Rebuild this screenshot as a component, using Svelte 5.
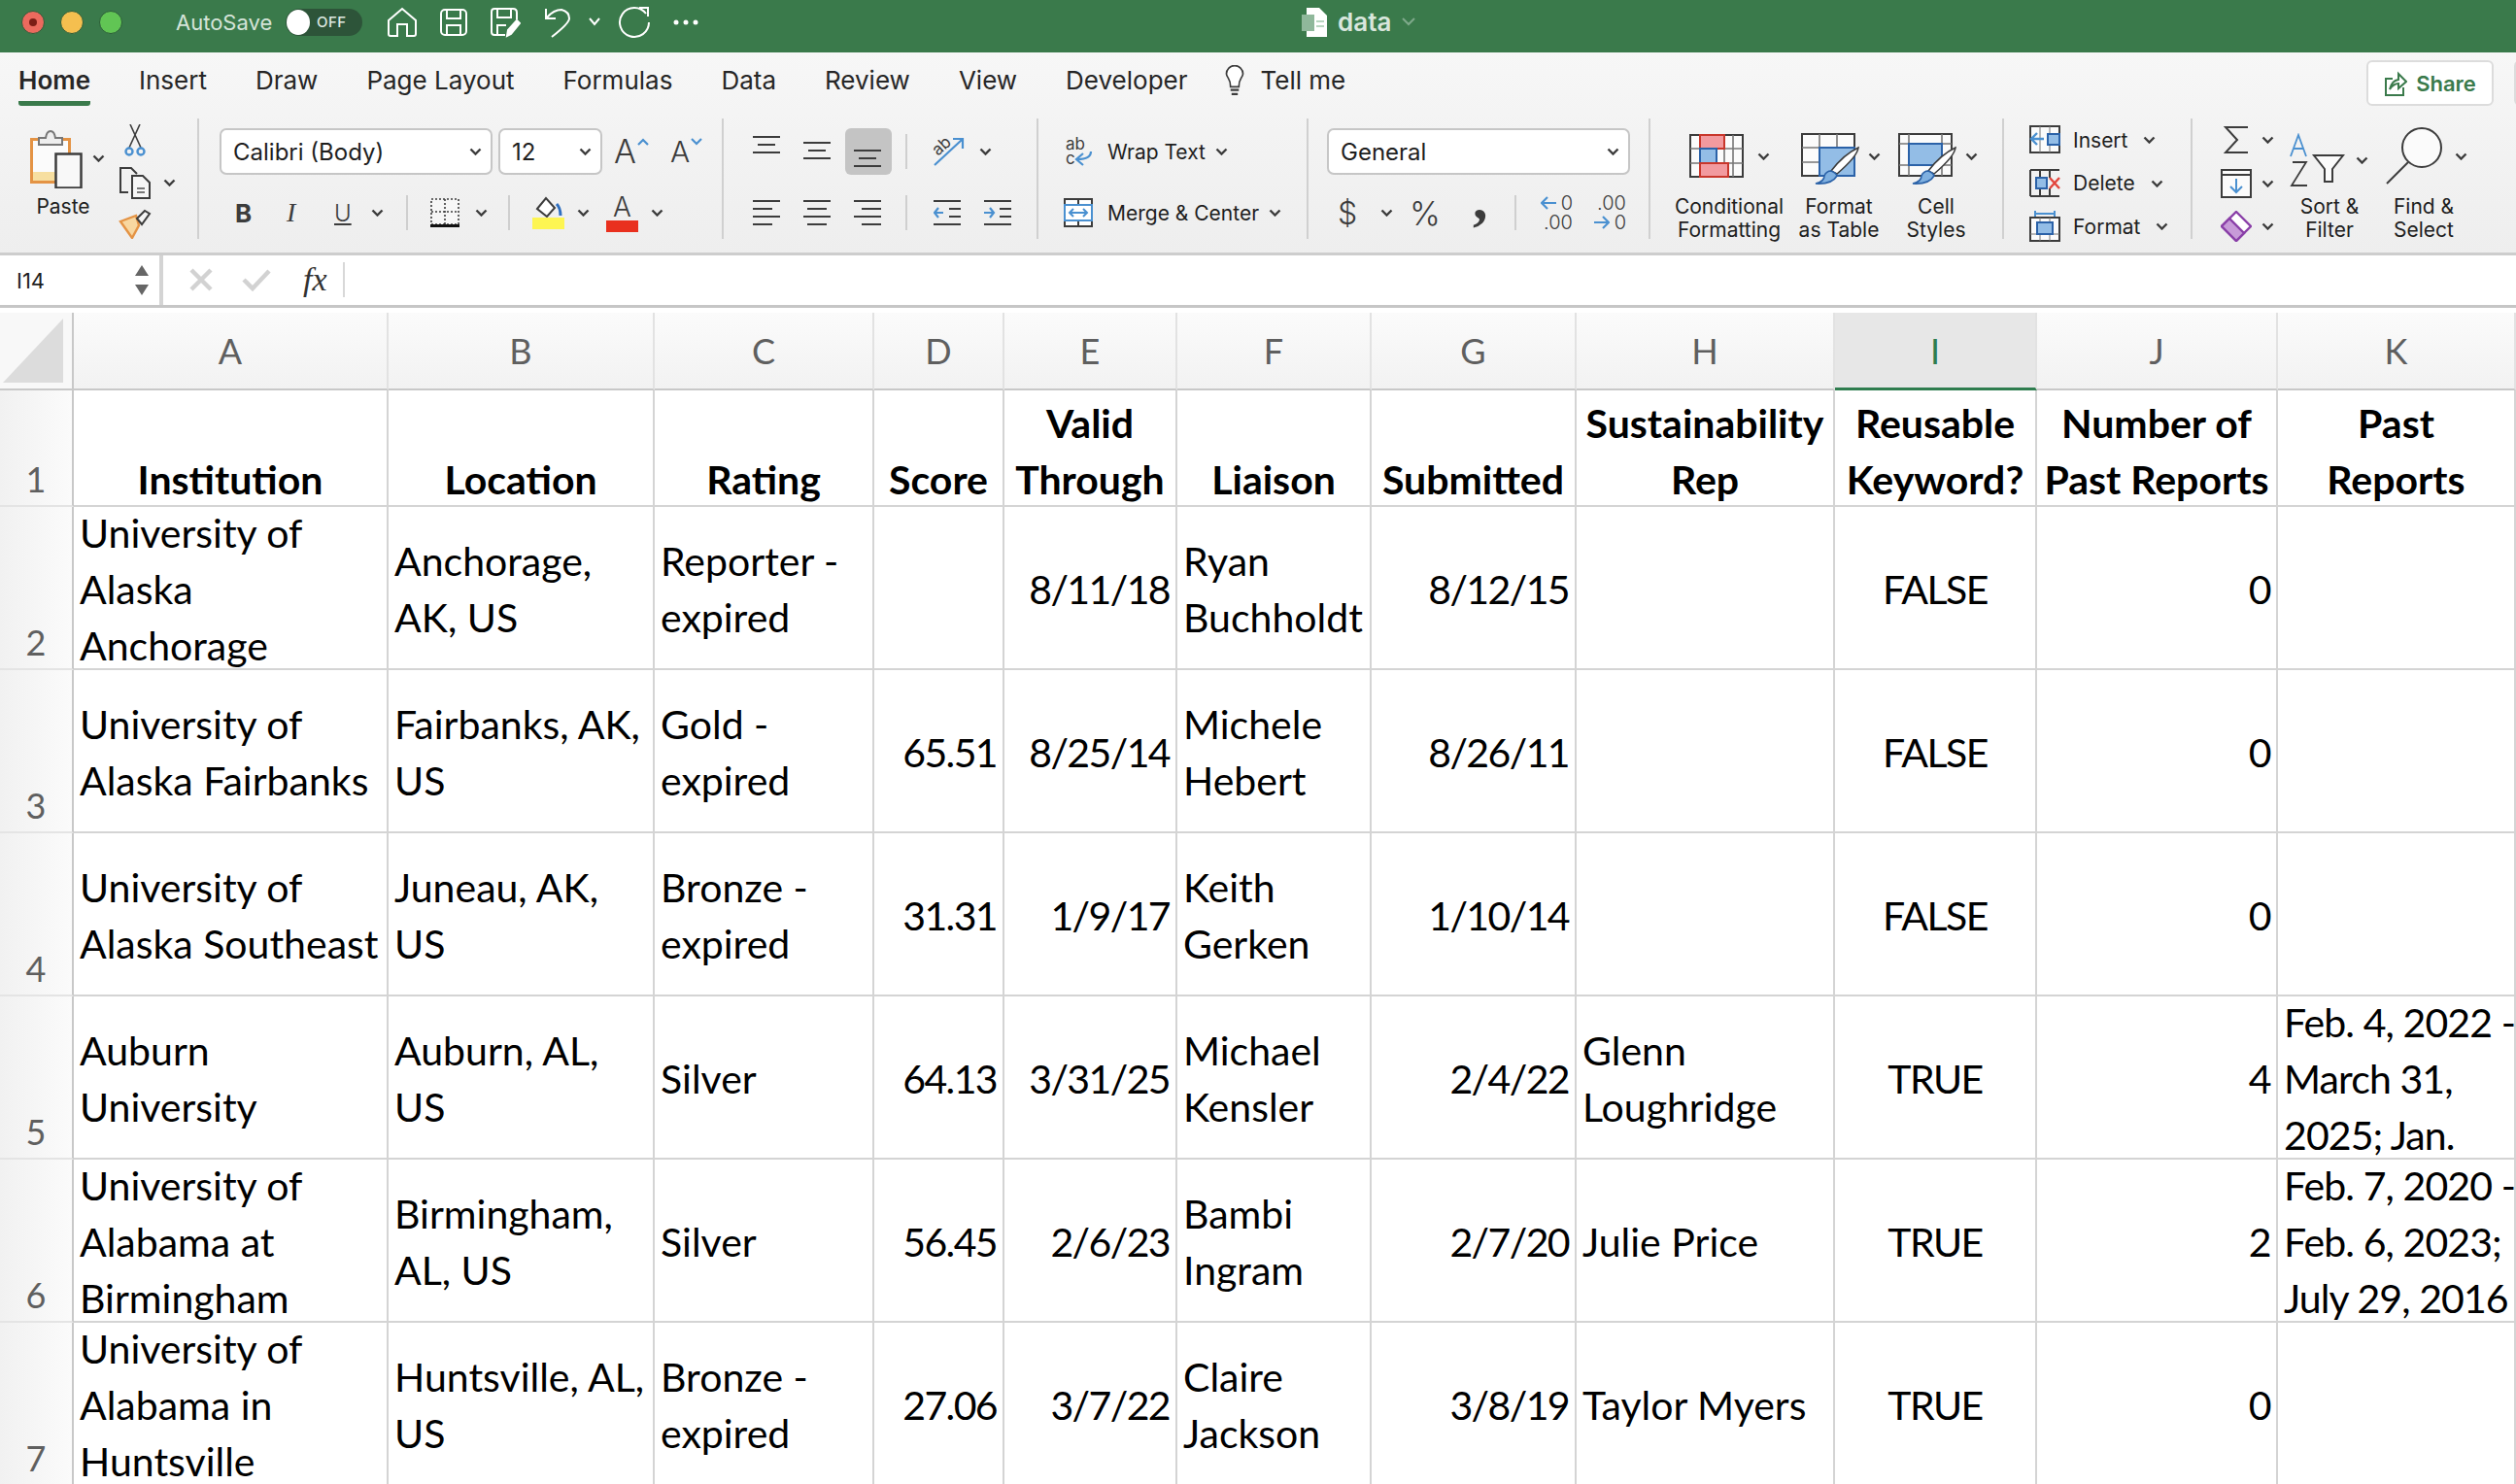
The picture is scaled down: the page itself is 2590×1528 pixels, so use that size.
<script>
  const columns = ['A', 'B', 'C', 'D', 'E', 'F', 'G', 'H', 'I', 'J', 'K'];
  const align = ['l', 'l', 'l', 'r', 'r', 'l', 'r', 'l', 'c', 'r', 'k'];
  const headers = ['Institution', 'Location', 'Rating', 'Score', 'Valid\nThrough', 'Liaison', 'Submitted', 'Sustainability\nRep', 'Reusable\nKeyword?', 'Number of\nPast Reports', 'Past\nReports'];
  const rows = [
    ['University of\nAlaska\nAnchorage', 'Anchorage,\nAK, US', 'Reporter -\nexpired', '', '8/11/18', 'Ryan\nBuchholdt', '8/12/15', '', 'FALSE', '0', ''],
    ['University of\nAlaska Fairbanks', 'Fairbanks, AK,\nUS', 'Gold -\nexpired', '65.51', '8/25/14', 'Michele\nHebert', '8/26/11', '', 'FALSE', '0', ''],
    ['University of\nAlaska Southeast', 'Juneau, AK,\nUS', 'Bronze -\nexpired', '31.31', '1/9/17', 'Keith\nGerken', '1/10/14', '', 'FALSE', '0', ''],
    ['Auburn\nUniversity', 'Auburn, AL,\nUS', 'Silver', '64.13', '3/31/25', 'Michael\nKensler', '2/4/22', 'Glenn\nLoughridge', 'TRUE', '4', 'Feb. 4, 2022 -\nMarch 31,\n2025; Jan.'],
    ['University of\nAlabama at\nBirmingham', 'Birmingham,\nAL, US', 'Silver', '56.45', '2/6/23', 'Bambi\nIngram', '2/7/20', 'Julie Price', 'TRUE', '2', 'Feb. 7, 2020 -\nFeb. 6, 2023;\nJuly 29, 2016'],
    ['University of\nAlabama in\nHuntsville', 'Huntsville, AL,\nUS', 'Bronze -\nexpired', '27.06', '3/7/22', 'Claire\nJackson', '3/8/19', 'Taylor Myers', 'TRUE', '0', '']
  ];
  const tabs = ['Insert', 'Draw', 'Page Layout', 'Formulas', 'Data', 'Review', 'View', 'Developer'];
</script>

{#snippet chev()}
  <svg class="chev" width="13" height="8" viewBox="0 0 13 8"><path d="M1.5 1.5 L6.5 6.5 L11.5 1.5" fill="none" stroke="#3c3c3c" stroke-width="2.4" /></svg>
{/snippet}

{#snippet lines()}
  <svg width="28" height="18" viewBox="0 0 28 18" fill="none" stroke="#3c3c3c" stroke-width="2">
    <path d="M0 1H28M5 9H23M0 17H28" />
  </svg>
{/snippet}

<div class="page">
  <header class="title">
    <div class="lights">
      <span class="light red"><i></i></span>
      <span class="light yellow"></span>
      <span class="light green"></span>
    </div>
    <span class="autosave">AutoSave</span>
    <span class="toggle"><i></i><b>OFF</b></span>
    <div class="quick">
      <svg width="32" height="32" viewBox="0 0 32 32" fill="none" stroke="#fff" stroke-width="2"><path d="M2 14 L16 2 L30 14 V28 Q30 30 28 30 H21 V18 H11 V30 H4 Q2 30 2 28 Z" /></svg>
      <svg width="30" height="30" viewBox="0 0 30 30" fill="none" stroke="#fff" stroke-width="2"><rect x="2" y="2" width="26" height="26" rx="4" /><path d="M8 2V11H22V2M8 28V18H22V28" /></svg>
      <svg width="32" height="32" viewBox="0 0 32 32" fill="none" stroke="#fff" stroke-width="2"><path d="M16 29H5Q2 29 2 26V5Q2 2 5 2H24Q28 2 28 6V13M8 2V11H22V2M8 28V19H17" /><path d="M18 30 L19 24 L28 14 L31 17 L22 28 Z" fill="#fff" /></svg>
      <svg class="undo" width="32" height="32" viewBox="0 0 32 32" fill="none" stroke="#fff" stroke-width="2"><path d="M2 2V12H12M3 11 Q10 3 18 3 Q26 5 26 12 Q26 17 8 31" /></svg>
      <svg class="small" width="12" height="9" viewBox="0 0 12 9" fill="none" stroke="#fff" stroke-width="2"><path d="M1 1L6 7L11 1" /></svg>
      <svg class="redo" width="34" height="34" viewBox="0 0 34 34" fill="none" stroke="#fff" stroke-width="2"><path d="M29 8 A15 15 0 1 0 32 17M22 2H31V11" /></svg>
      <svg class="dots" width="26" height="6" viewBox="0 0 26 6" fill="#fff"><circle cx="3" cy="3" r="2.5" /><circle cx="13" cy="3" r="2.5" /><circle cx="23" cy="3" r="2.5" /></svg>
    </div>
    <div class="doc">
      <svg width="26" height="30" viewBox="0 0 26 30"><path d="M5 0H18L26 8V30H5Z" fill="#fff" /><rect x="0" y="7" width="13" height="17" fill="#8fb89b" /><path d="M15 14h8M15 19h8" stroke="#b8d6c0" stroke-width="2" /></svg>
      <span>data</span>
      <svg width="14" height="9" viewBox="0 0 14 9" fill="none" stroke="#7fa98b" stroke-width="2"><path d="M1 1L7 7L13 1" /></svg>
    </div>
  </header>

  <section class="ribbon">
    <nav class="tabs">
      <span class="tab active">Home</span>
      {#each tabs as tab}
        <span class="tab">{tab}</span>
      {/each}
      <svg class="bulb" width="20" height="32" viewBox="0 0 18 30" fill="none" stroke="#3c3c3c" stroke-width="1.6"><path d="M5 21 Q5 16 3 13 Q1 10 1 8.5 A8 8 0 0 1 17 8.5 Q17 10 15 13 Q13 16 13 21 Z" fill="#fff" /><path d="M5 24H13M6 28H12" stroke-width="2" /></svg>
      <span class="tab tell">Tell me</span>
      <span class="share">
        <svg width="24" height="26" viewBox="0 0 24 26" fill="none" stroke="#3a7a4b" stroke-width="2"><path d="M9 8H2V25H20V17" /><path d="M6 19 Q8 10 15 9V3L23 11L15 18V13Q10 13 6 19Z" /></svg>
        Share
      </span>
      <span class="more"></span>
    </nav>

    <div class="groups">
      <div class="group clipboard">
        <div class="big paste">
          <div class="iconrow">
            <svg width="60" height="62" viewBox="0 0 60 62">
              <rect x="3.5" y="11.5" width="39" height="44" fill="#f7dfa0" stroke="#e49344" stroke-width="3" />
              <rect x="5" y="13" width="36" height="32" fill="#fbfbfb" />
              <path d="M11 17V10H18Q19 3 23 3Q27 3 28 10H35V17Z" fill="#eee" stroke="#777" stroke-width="2" />
              <rect x="28.5" y="26.5" width="26" height="35" fill="#f8f8f8" stroke="#3c3c3c" stroke-width="2.5" />
            </svg>
            {@render chev()}
          </div>
          <span class="label">Paste</span>
        </div>
        <div class="tools">
          <svg width="22" height="34" viewBox="0 0 22 34" fill="none" stroke="#3c3c3c" stroke-width="1.6"><path d="M5 24 L16 0M17 24 L6 0" /><circle cx="5" cy="28" r="3.5" stroke="#4a90d0" stroke-width="2.4" /><circle cx="17" cy="28" r="3.5" stroke="#4a90d0" stroke-width="2.4" /></svg>
          <span class="toolrow">
            <svg width="34" height="34" viewBox="0 0 34 34" fill="none" stroke="#3c3c3c" stroke-width="2"><path d="M10 27H2V2H13L19 8" /><path d="M14 10H25L32 17V33H14Z" fill="#f6f6f6" /><path d="M19 23H27M19 27H27" stroke="#777" /></svg>
            {@render chev()}
          </span>
          <svg width="34" height="32" viewBox="0 0 34 32"><path d="M2 14 L18 8 L21 18 L14 31 Z" fill="#f8d7a0" stroke="#e49344" stroke-width="2.4" /><path d="M19 11 L27 3 L32 6 L24 17 Z" fill="#f6f6f6" stroke="#3c3c3c" stroke-width="2" /></svg>
        </div>
      </div>

      <div class="group font">
        <div class="tworows">
          <div class="fontrow">
            <span class="select family">Calibri (Body){@render chev()}</span>
            <span class="select size">12{@render chev()}</span>
            <span class="grow">A<svg width="12" height="8" viewBox="0 0 12 8" fill="none" stroke="#4a90d0" stroke-width="2.2"><path d="M1 7L6 2L11 7" /></svg></span>
            <span class="shrink">A<svg width="12" height="8" viewBox="0 0 12 8" fill="none" stroke="#4a90d0" stroke-width="2.2"><path d="M1 1L6 6L11 1" /></svg></span>
          </div>
          <div class="fontrow second">
            <b class="fb">B</b>
            <i class="fi">I</i>
            <span class="fu">U</span>
            <span class="c1">{@render chev()}</span>
            <span class="sep s1"></span>
            <svg class="borders" width="30" height="30" viewBox="0 0 30 30" fill="#f7f7f7"><path d="M1 1H29V27H1ZM15 1V27M1 14H29" stroke="#3c3c3c" stroke-width="1.6" stroke-dasharray="2 2" /><path d="M0 28.5H30" stroke="#111" stroke-width="3" /></svg>
            <span class="c2">{@render chev()}</span>
            <span class="sep s2"></span>
            <span class="swatch fill">
              <svg width="32" height="22" viewBox="0 0 32 22" fill="none" stroke="#3c3c3c" stroke-width="2"><path d="M4 13 L13 2 L22 12 L14 21 Z" fill="#fff" /><path d="M24 8 Q28 12 28 20" stroke="#2f6fc0" stroke-width="3" /></svg>
              <i></i>
            </span>
            <span class="c3">{@render chev()}</span>
            <span class="swatch color">
              <span>A</span>
              <i></i>
            </span>
            <span class="c4">{@render chev()}</span>
          </div>
        </div>
      </div>

      <div class="group alignment">
        <div class="tworows">
          <div class="alignrow">
            <span class="aicon v1">{@render lines()}</span>
            <span class="aicon v2">{@render lines()}</span>
            <span class="aicon v3 on">{@render lines()}</span>
            <span class="sep s3"></span>
            <svg class="orient" width="34" height="32" viewBox="0 0 34 32" fill="none"><path d="M2 30 L30 4M21 3H31V13" stroke="#4a90d0" stroke-width="2.2" /><text x="0" y="17" font-size="17" fill="#3c3c3c" transform="rotate(-42 8 12)" font-family="Inter, sans-serif">ab</text></svg>
            <span class="c5">{@render chev()}</span>
          </div>
          <div class="alignrow lower">
            <svg width="28" height="26" viewBox="0 0 28 26" fill="none" stroke="#3c3c3c" stroke-width="2"><path d="M0 1H28M0 9H20M0 17H28M0 25H20" /></svg>
            <svg width="28" height="26" viewBox="0 0 28 26" fill="none" stroke="#3c3c3c" stroke-width="2"><path d="M0 1H28M4 9H24M0 17H28M4 25H24" /></svg>
            <svg width="28" height="26" viewBox="0 0 28 26" fill="none" stroke="#3c3c3c" stroke-width="2"><path d="M0 1H28M8 9H28M0 17H28M8 25H28" /></svg>
            <span class="sep s4"></span>
            <svg width="28" height="26" viewBox="0 0 28 26" fill="none" stroke="#3c3c3c" stroke-width="2"><path d="M0 1H28M16 9H28M16 17H28M0 25H28" /><path d="M10 13H1M5 8L1 13L5 18" stroke="#4a90d0" stroke-width="2.2" /></svg>
            <svg width="28" height="26" viewBox="0 0 28 26" fill="none" stroke="#3c3c3c" stroke-width="2"><path d="M0 1H28M16 9H28M16 17H28M0 25H28" /><path d="M0 13H10M6 8L10 13L6 18" stroke="#4a90d0" stroke-width="2.2" /></svg>
          </div>
        </div>
      </div>

      <div class="group wrap">
        <div class="tworows">
          <div class="wraprow">
            <span class="wicon">
              <svg width="30" height="32" viewBox="0 0 30 32" fill="none"><text x="2" y="14" font-size="17" fill="#3c3c3c" font-family="Inter, sans-serif">ab</text><text x="2" y="29" font-size="17" fill="#3c3c3c" font-family="Inter, sans-serif">c</text><path d="M28 16 Q28 24 14 24M20 18L13 24L20 30" stroke="#4a90d0" stroke-width="2.2" /></svg>
            </span>
            <span class="wlabel">Wrap Text</span>
            {@render chev()}
          </div>
          <div class="wraprow">
            <span class="wicon">
              <svg width="30" height="30" viewBox="0 0 30 30" fill="#fff"><rect x="1" y="1" width="28" height="28" stroke="#3c3c3c" stroke-width="2" /><path d="M15 1V7M15 23V29" stroke="#3c3c3c" stroke-width="2" fill="none" /><rect x="1" y="7" width="28" height="16" stroke="#4a90d0" stroke-width="2" /><path d="M6 15H24M10 11L6 15L10 19M20 11L24 15L20 19" stroke="#4a90d0" stroke-width="2" fill="none" /></svg>
            </span>
            <span class="wlabel">Merge &amp; Center</span>
            {@render chev()}
          </div>
        </div>
      </div>

      <div class="group number">
        <div class="tworows">
          <span class="select general">General{@render chev()}</span>
          <div class="numrow">
            <span class="dollar">$</span>
            <span class="c6">{@render chev()}</span>
            <span class="percent">%</span>
            <span class="comma">,</span>
            <span class="sep s5"></span>
            <span class="dec one">
              <svg width="16" height="14" viewBox="0 0 16 14" fill="none" stroke="#4a90d0" stroke-width="2.2"><path d="M16 7H2M7 1L1 7L7 13" /></svg>
              <em>0</em><em class="full">.00</em>
            </span>
            <span class="dec two">
              <em class="first">.00</em>
              <svg width="16" height="14" viewBox="0 0 16 14" fill="none" stroke="#4a90d0" stroke-width="2.2"><path d="M0 7H14M9 1L15 7L9 13" /></svg>
              <em>0</em>
            </span>
          </div>
        </div>
      </div>

      <div class="group styles">
        <div class="big cf">
          <div class="iconrow">
            <svg width="56" height="46" viewBox="0 0 56 46" fill="#fbfbfb">
              <rect x="1" y="1" width="54" height="43" stroke="#3c3c3c" stroke-width="2" />
              <path d="M11 1V44M36 1V44M45 1V44M1 15H55M1 30H55" stroke="#777" stroke-width="1.6" fill="none" />
              <rect x="11" y="1" width="25" height="14" fill="#f29a9f" stroke="#c8362b" stroke-width="2" />
              <rect x="11" y="15" width="17" height="15" fill="#93bde6" stroke="#2b62a8" stroke-width="2" />
              <rect x="11" y="30" width="29" height="14" fill="#f29a9f" stroke="#c8362b" stroke-width="2" />
            </svg>
            {@render chev()}
          </div>
          <span class="label">Conditional<br />Formatting</span>
        </div>
        <div class="big ft">
          <div class="iconrow">
            <svg width="62" height="54" viewBox="0 0 62 54" fill="#fbfbfb">
              <rect x="1" y="1" width="54" height="43" stroke="#3c3c3c" stroke-width="2" />
              <path d="M19 1V44M37 1V44M1 15H55M1 30H55" stroke="#777" stroke-width="1.6" fill="none" />
              <rect x="19" y="15" width="36" height="29" fill="#93bde6" stroke="#2b62a8" stroke-width="2" />
              <path d="M59 15 Q58 24 37 42 L31 39 Q44 22 59 15Z" fill="#fff" stroke="#3c3c3c" stroke-width="1.6" />
              <path d="M31 39 Q36 41 37 44 Q32 53 15 52 Q24 50 24 44 Q26 39 31 39Z" fill="#7fb0e0" stroke="#2b62a8" stroke-width="1.6" />
            </svg>
            {@render chev()}
          </div>
          <span class="label">Format<br />as Table</span>
        </div>
        <div class="big cs">
          <div class="iconrow">
            <svg width="62" height="54" viewBox="0 0 62 54" fill="#fbfbfb">
              <rect x="1" y="1" width="54" height="43" stroke="#3c3c3c" stroke-width="2" />
              <path d="M11 1V44M45 1V44M1 11H55M1 33H55" stroke="#777" stroke-width="1.6" fill="none" />
              <rect x="11" y="11" width="34" height="22" fill="#93bde6" stroke="#2b62a8" stroke-width="2" />
              <path d="M59 15 Q58 24 37 42 L31 39 Q44 22 59 15Z" fill="#fff" stroke="#3c3c3c" stroke-width="1.6" />
              <path d="M31 39 Q36 41 37 44 Q32 53 15 52 Q24 50 24 44 Q26 39 31 39Z" fill="#7fb0e0" stroke="#2b62a8" stroke-width="1.6" />
            </svg>
            {@render chev()}
          </div>
          <span class="label">Cell<br />Styles</span>
        </div>
      </div>

      <div class="group cells">
        <div class="cellrow">
          <svg width="32" height="30" viewBox="0 0 32 30" fill="#fbfbfb"><rect x="1" y="1" width="30" height="27" stroke="#3c3c3c" stroke-width="2" /><path d="M11 1V28M21 1V28" stroke="#777" fill="none" /><rect x="19" y="9" width="12" height="11" fill="#93bde6" stroke="#2b62a8" stroke-width="2" /><path d="M15 14H2M8 8L2 14L8 20" fill="none" stroke="#4a90d0" stroke-width="2.4" /></svg>
          <span>Insert</span>{@render chev()}
        </div>
        <div class="cellrow">
          <svg width="32" height="30" viewBox="0 0 32 30" fill="#fbfbfb"><path d="M1 1H31M1 28H31M1 1V28M11 1V9M21 1V9M11 20V28M21 20V28" stroke="#3c3c3c" stroke-width="2" fill="none" /><rect x="7" y="9" width="11" height="11" fill="#93bde6" stroke="#2b62a8" stroke-width="2" /><path d="M21 9L31 20M31 9L21 20" stroke="#e2453c" stroke-width="2.4" /></svg>
          <span>Delete</span>{@render chev()}
        </div>
        <div class="cellrow">
          <svg width="32" height="32" viewBox="0 0 32 32" fill="#fbfbfb"><rect x="1" y="7" width="30" height="24" stroke="#3c3c3c" stroke-width="2" /><path d="M11 7V31M21 7V31M1 24H31" stroke="#777" fill="none" /><rect x="8" y="12" width="16" height="12" fill="#93bde6" stroke="#2b62a8" stroke-width="2" /><path d="M6 3H26M6 0V6M26 0V6" stroke="#4a90d0" stroke-width="2" fill="none" /></svg>
          <span>Format</span>{@render chev()}
        </div>
      </div>

      <div class="group editing">
        <div class="sums">
          <div class="sumrow">
            <svg width="26" height="30" viewBox="0 0 26 30" fill="none" stroke="#3c3c3c" stroke-width="2"><path d="M25 2H2L14 15L2 28H25" /></svg>
            {@render chev()}
          </div>
          <div class="sumrow">
            <svg width="32" height="30" viewBox="0 0 32 30" fill="#fbfbfb" stroke="#3c3c3c" stroke-width="2"><rect x="1" y="1" width="30" height="28" /><path d="M1 6H31" /><path d="M16 10V24M10 18L16 24L22 18" stroke="#4a90d0" fill="none" /></svg>
            {@render chev()}
          </div>
          <div class="sumrow">
            <svg width="32" height="32" viewBox="0 0 32 32" stroke="#8a3fa8" stroke-width="2.4"><path d="M16 1L31 16L16 31L1 16Z" fill="#fff" /><path d="M1 16L16 31L24 23L9 8Z" fill="#c79ad8" /></svg>
            {@render chev()}
          </div>
        </div>
        <div class="big sort">
          <div class="iconrow">
            <span class="az">
              <svg width="58" height="56" viewBox="0 0 58 56" fill="none">
                <path d="M2 24L10 2L18 24M5 16H15" stroke="#4a90d0" stroke-width="1.8" />
                <path d="M4 30H18L3 54H19" stroke="#3c3c3c" stroke-width="1.8" />
                <path d="M26 23H56L45 37V50H37V37Z" stroke="#3c3c3c" stroke-width="2" fill="#fbfbfb" />
              </svg>
            </span>
            {@render chev()}
          </div>
          <span class="label">Sort &amp;<br />Filter</span>
        </div>
        <div class="big find">
          <div class="iconrow">
            <svg width="60" height="60" viewBox="0 0 60 60" fill="#fbfbfb" stroke="#3c3c3c" stroke-width="2"><ellipse cx="38" cy="21" rx="20" ry="20" /><path d="M24 36L2 58" /></svg>
            {@render chev()}
          </div>
          <span class="label">Find &amp;<br />Select</span>
        </div>
      </div>
    </div>
  </section>

  <div class="formula">
    <div class="namebox">
      <span>I14</span>
      <span class="spin">
        <svg width="14" height="11" viewBox="0 0 14 11" fill="#666"><path d="M7 0L14 11H0Z" /></svg>
        <svg width="14" height="11" viewBox="0 0 14 11" fill="#666"><path d="M7 11L14 0H0Z" /></svg>
      </span>
    </div>
    <div class="fbuttons">
      <svg width="24" height="24" viewBox="0 0 24 24" stroke="#d2d2d2" stroke-width="4.5"><path d="M2 2L22 22M22 2L2 22" /></svg>
      <svg width="30" height="24" viewBox="0 0 30 24" fill="none" stroke="#d2d2d2" stroke-width="4.5"><path d="M2 12L11 21L28 3" /></svg>
      <span class="fx">fx</span>
    </div>
  </div>

  <main class="sheet">
    <div class="corner"><i></i></div>
    {#each columns as col}
      <div class="colhead" class:sel={col === 'I'}>{col}</div>
    {/each}

    <div class="rowhead">1</div>
    {#each headers as text}
      <div class="cell head"><span>{text}</span></div>
    {/each}

    {#each rows as row, r}
      <div class="rowhead">{r + 2}</div>
      {#each row as text, c}
        <div class="cell {align[c]}">{text}</div>
      {/each}
    {/each}
  </main>
</div>

<style>
  :global(body) {
    margin: 0;
    background: #fff;
  }
  .page {
    width: 2590px;
    height: 1528px;
    overflow: hidden;
    font-family: Inter, "Liberation Sans", sans-serif;
    color: #1e1e1e;
  }

  /* title bar */
  .title {
    height: 54px;
    box-sizing: border-box;
    padding-bottom: 9px;
    background: #3a7a4b;
    display: flex;
    align-items: center;
    position: relative;
  }
  .lights {
    display: flex;
    gap: 16px;
    margin-left: 22px;
  }
  .light {
    width: 24px;
    height: 24px;
    border-radius: 50%;
    display: flex;
    align-items: center;
    justify-content: center;
    box-sizing: border-box;
    border: 1px solid #2c5c39;
  }
  .red { background: #ec6a5e; }
  .red i {
    width: 8px;
    height: 8px;
    border-radius: 50%;
    background: #7c1d16;
  }
  .yellow { background: #f5bf4f; }
  .green { background: #61c554; }
  .autosave {
    margin-left: 55px;
    font-size: 22px;
    color: #d5e4d9;
    width: 113px;
  }
  .toggle {
    width: 79px;
    height: 28px;
    border-radius: 14px;
    background: #2d5439;
    display: flex;
    align-items: center;
    gap: 7px;
  }
  .toggle i {
    width: 24px;
    height: 26px;
    border-radius: 50%;
    background: #fff;
    margin-left: 1px;
  }
  .toggle b {
    font-size: 15px;
    font-weight: 500;
    color: #dfe9e2;
    letter-spacing: 0.5px;
  }
  .quick {
    display: flex;
    align-items: center;
    margin-left: 25px;
    gap: 22px;
  }
  .quick .undo { margin-left: 2px; }
  .quick .small { margin-left: -8px; }
  .quick .redo { margin-left: -4px; }
  .quick .dots { margin-left: 1px; }
  .doc {
    position: absolute;
    left: 1340px;
    top: 7px;
    display: flex;
    align-items: center;
    gap: 11px;
    font-size: 26px;
    font-weight: 600;
    color: #d9e6dc;
  }

  /* ribbon */
  .ribbon {
    height: 209px;
    box-sizing: border-box;
    background: linear-gradient(#f7f7f7, #f3f3f3 40%, #eeeeee);
    border-bottom: 3px solid #cdcdcd;
  }
  .tabs {
    height: 68px;
    display: flex;
    align-items: flex-start;
    padding-left: 19px;
    gap: 50px;
    font-size: 26px;
    color: #262626;
    position: relative;
  }
  .tab {
    padding-top: 13px;
    line-height: 32px;
  }
  .tab.active {
    font-weight: 600;
    height: 37px;
    border-bottom: 5px solid #3a7a4b;
    border-radius: 0 0 3px 3px;
  }
  .bulb {
    margin: 13px 0 0 -12px;
  }
  .tell {
    margin-left: -33px;
  }
  .share {
    position: absolute;
    left: 2436px;
    top: 8px;
    width: 131px;
    height: 47px;
    box-sizing: border-box;
    background: #fff;
    border: 2px solid #dcdcdc;
    border-radius: 6px;
    display: flex;
    align-items: center;
    justify-content: center;
    gap: 9px;
    font-size: 22px;
    font-weight: 600;
    color: #3a7a4b;
  }
  .more {
    position: absolute;
    left: 2588px;
    top: 8px;
    width: 20px;
    height: 47px;
    box-sizing: border-box;
    background: #fff;
    border: 2px solid #dcdcdc;
    border-radius: 6px;
  }
  .groups {
    display: flex;
    height: 124px;
  }
  .group {
    box-sizing: border-box;
    border-right: 2px solid #d0d0d0;
    display: flex;
    flex-shrink: 0;
  }
  .clipboard { width: 205px; padding-left: 29px; }
  .font { width: 540px; padding-left: 21px; }
  .alignment { width: 324px; padding-left: 30px; }
  .wrap { width: 278px; padding-left: 26px; }
  .number { width: 352px; padding-left: 19px; }
  .styles { width: 364px; padding-left: 17px; }
  .cells { width: 194px; padding-left: 26px; flex-direction: column; }
  .editing { width: 310px; padding-left: 24px; border-right: none; }

  .big {
    display: flex;
    flex-direction: column;
    align-items: center;
  }
  .iconrow {
    height: 77px;
    flex-shrink: 0;
    display: flex;
    align-items: center;
    align-self: flex-start;
  }
  .label {
    font-size: 21px;
    line-height: 24px;
    margin-top: 2px;
    text-align: center;
    white-space: nowrap;
  }
  .chev {
    flex-shrink: 0;
    display: block;
  }

  .paste { width: 66px; margin-right: 23px; }
  .paste .iconrow { gap: 6px; padding-top: 2px; width: 90px; }
  .paste .label { margin-left: 6px; margin-top: 0; }
  .tools {
    width: 60px;
    height: 124px;
    display: flex;
    flex-direction: column;
    justify-content: space-between;
    align-items: flex-start;
    padding: 6px 0 0 4px;
    box-sizing: border-box;
  }
  .tools > svg:first-child { margin-left: 6px; }
  .toolrow {
    display: flex;
    align-items: center;
    gap: 12px;
  }

  .tworows {
    display: grid;
    grid-template-rows: 48px 48px;
    row-gap: 15px;
    padding-top: 10px;
  }
  .select {
    height: 48px;
    box-sizing: border-box;
    background: #fff;
    border: 2px solid #c6c6c6;
    border-radius: 7px;
    font-size: 24px;
    display: flex;
    align-items: center;
    justify-content: space-between;
    padding: 0 9px 0 12px;
  }
  .fontrow {
    display: flex;
    align-items: center;
  }
  .family { width: 281px; }
  .size { width: 107px; margin-left: 6px; }
  .grow, .shrink {
    display: flex;
    font-weight: 300;
    line-height: 40px;
    color: #3c3c3c;
    align-items: flex-start;
  }
  .grow { font-size: 34px; margin-left: 12px; }
  .shrink { font-size: 30px; margin-left: 22px; }
  .grow svg, .shrink svg { margin-top: 6px; margin-left: 1px; }
  .second { align-items: center; font-size: 26px; color: #3c3c3c; }
  .fb { margin-left: 16px; width: 53px; }
  .fi { font-family: "Liberation Serif", serif; width: 49px; font-size: 28px; }
  .fu {
    width: 19px;
    font-size: 24px;
    font-weight: 300;
    text-decoration: underline;
    margin-right: 19px;
  }
  .c1 { width: 25px; }
  .sep {
    width: 2px;
    height: 36px;
    flex-shrink: 0;
    background: #cfcfcf;
    display: block;
  }
  .s1 { margin-left: 11px; margin-right: 23px; }
  .s2 { margin-left: 19px; margin-right: 23px; }
  .borders { margin-right: 16px; }
  .c2 { width: 15px; }
  .swatch {
    width: 33px;
    display: flex;
    flex-direction: column;
    align-items: center;
  }
  .swatch i {
    width: 33px;
    height: 12px;
    display: block;
  }
  .fill i { background: #fdf552; }
  .color i { background: #e9301e; }
  .color span {
    font-size: 28px;
    line-height: 27px;
    font-weight: 300;
  }
  .c3 { width: 13px; margin: 0 17px 0 13px; }
  .c4 { width: 13px; margin-left: 13px; }

  .alignrow {
    display: flex;
    align-items: center;
    gap: 24px;
    height: 48px;
    position: relative;
  }
  .aicon {
    width: 28px;
    display: block;
    line-height: 0;
  }
  .v1 { margin-top: -14px; }
  .v2 { margin-top: -2px; }
  .v3 { margin-top: 14px; }
  .v3.on::before {
    content: "";
    position: absolute;
    left: 95px;
    top: 0;
    width: 48px;
    height: 48px;
    background: #c4c4c4;
    border-radius: 6px;
    z-index: 0;
  }
  .v3 svg { position: relative; z-index: 1; }
  .s3 { margin-left: 1px; margin-right: 2px; }
  .c5 { margin-left: -10px; }
  .lower .s4 { margin-left: 1px; margin-right: 3px; }
  .wraprow {
    display: flex;
    align-items: center;
    height: 48px;
    font-size: 21px;
  }
  .wicon {
    width: 45px;
    display: block;
    line-height: 0;
  }
  .wlabel { margin-right: 10px; }
  .general { width: 312px; }
  .numrow {
    display: flex;
    align-items: center;
    color: #3c3c3c;
  }
  .dollar { font-size: 32px; font-weight: 300; margin-left: 11px; width: 25px; }
  .c6 { width: 13px; margin: 0 17px 0 19px; }
  .percent { font-size: 34px; font-weight: 300; width: 38px; }
  .comma {
    font-size: 62px;
    font-weight: 700;
    line-height: 30px;
    margin: -30px 0 0 27px;
    font-family: "Liberation Serif", serif;
    width: 30px;
  }
  .s5 { margin-left: 13px; }
  .dec {
    display: grid;
    grid-template-columns: 18px 20px;
    font-size: 20px;
    font-weight: 300;
    line-height: 20px;
    align-items: center;
    justify-items: center;
  }
  .dec em { font-style: normal; }
  .dec .full { grid-column: 1 / 3; }
  .one { margin-left: 24px; }
  .two { margin-left: 17px; }
  .two .first { grid-column: 1 / 3; }

  .cf { width: 128px; }
  .cf .iconrow { padding-left: 23px; gap: 14px; }
  .ft { width: 98px; }
  .ft .iconrow { padding-left: 10px; gap: 7px; }
  .cs { width: 102px; }
  .cs .iconrow { padding-left: 12px; gap: 7px; }
  .ft .iconrow svg:first-child, .cs .iconrow svg:first-child { margin-top: 7px; }
  .cellrow {
    height: 44.5px;
    flex-shrink: 0;
    display: flex;
    align-items: center;
    gap: 13px;
    font-size: 21px;
  }
  .cellrow .chev { margin-left: 3px; }
  .sums { width: 72px; }
  .sumrow {
    height: 44.5px;
    display: grid;
    grid-template-columns: 42px 22px;
    align-items: center;
    justify-items: center;
  }
  .sort { width: 90px; margin-right: 6px; }
  .sort .iconrow { gap: 11px; padding-left: 3px; padding-top: 8px; height: 69px; }
  .az { display: block; line-height: 0; }
  .find { width: 92px; }
  .find .iconrow { gap: 12px; padding-left: 6px; }

  /* formula bar */
  .formula {
    height: 54px;
    display: flex;
    background: #fff;
    box-sizing: border-box;
    border-bottom: 3px solid #c6c6c6;
  }
  .namebox {
    width: 168px;
    box-sizing: border-box;
    border-right: 4px solid #d4d4d4;
    display: flex;
    align-items: center;
    justify-content: space-between;
    padding: 0 11px 0 17px;
    font-size: 22px;
  }
  .spin {
    display: flex;
    flex-direction: column;
    gap: 9px;
  }
  .spin svg { display: block; }
  .fbuttons {
    display: flex;
    align-items: center;
    gap: 30px;
    padding-left: 27px;
    padding-right: 16px;
    height: 36px;
    margin-top: 7px;
    border-right: 2px solid #d8d8d8;
  }
  .fx {
    font-family: "Liberation Serif", serif;
    font-style: italic;
    font-size: 34px;
    color: #333;
    margin-left: 3px;
  }

  /* sheet */
  .sheet {
    display: grid;
    grid-template-columns: 76px 324px 274px 226px 134px 178px 200px 211px 266px 208px 248px 245px;
    grid-template-rows: 80px 120px repeat(6, 168px);
    font-family: Lato, "Open Sans", sans-serif;
    margin-top: 5px;
    font-size: 41px;
    line-height: 58px;
    color: #000;
  }
  .corner {
    box-sizing: border-box;
    border-right: 2px solid #c8c8c8;
    border-bottom: 2px solid #c8c8c8;
    padding: 6px 9px 6px 3px;
    background: #f8f8f8;
  }
  .corner i {
    display: block;
    height: 100%;
    background: #dcdcdc;
    clip-path: polygon(100% 0, 100% 100%, 0 100%);
  }
  .colhead {
    box-sizing: border-box;
    background: linear-gradient(#fbfbfb, #f2f2f2);
    border-right: 2px solid #e2e2e2;
    border-bottom: 2px solid #c8c8c8;
    display: flex;
    align-items: center;
    justify-content: center;
    color: #5f5f5f;
    font-size: 36px;
  }
  .colhead.sel {
    background: #e7e7e7;
    border-bottom: 3px solid #2f7d4f;
    color: #2f7d4f;
  }
  .rowhead {
    box-sizing: border-box;
    background: linear-gradient(90deg, #f1f1f1, #fbfbfb);
    border-right: 2px solid #c8c8c8;
    border-bottom: 2px solid #e4e4e4;
    color: #5f5f5f;
    display: flex;
    align-items: flex-end;
    justify-content: center;
    font-size: 36px;
    line-height: 54px;
  }
  .cell {
    box-sizing: border-box;
    border-right: 2px solid #d4d4d4;
    border-bottom: 2px solid #d4d4d4;
    padding: 4px 6px 0 6px;
    white-space: pre;
    overflow: hidden;
    display: flex;
    align-items: center;
  }
  .cell.r { justify-content: flex-end; text-align: right; letter-spacing: -1.6px; }
  .cell.c { justify-content: center; text-align: center; letter-spacing: -1.5px; }
  .cell.k { letter-spacing: -0.9px; }
  .cell.head {
    font-weight: 700;
    align-items: flex-end;
    justify-content: center;
    text-align: center;
  }
  .cell.head span {
    transform: translateY(3px);
  }
</style>
